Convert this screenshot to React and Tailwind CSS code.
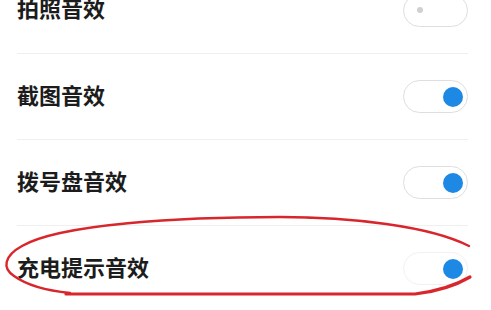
const rows = [
  { label: "拍照音效", on: false },
  { label: "截图音效", on: true },
  { label: "拨号盘音效", on: true },
  { label: "充电提示音效", on: true, faded: true },
];

function Toggle({ on, faded }) {
  return (
    <div
      className={`relative w-[65px] h-[33px] rounded-full border-[1.5px] bg-white flex items-center shrink-0 ${
        faded ? "border-[#f1f1f1]" : "border-[#dedede]"
      }`}
    >
      {on ? (
        <span className="ml-auto mr-[4px] w-[20px] h-[20px] rounded-full bg-[#1e88e5]" />
      ) : (
        <span className="ml-[13px] w-[6px] h-[6px] rounded-full bg-[#d0d0d0]" />
      )}
    </div>
  );
}

export default function App() {
  return (
    <div
      className="relative w-[491px] h-[310px] overflow-hidden bg-white"
      style={{ fontFamily: '"Noto Sans CJK SC", "Noto Sans", sans-serif' }}
    >
      <div className="-mt-[33px] pl-[17px] pr-[23px]">
        {rows.map((r, i) => (
          <div key={r.label}>
            {i > 0 && <div className="h-px bg-[#efefef]" />}
            <div
              className={`flex items-center justify-between ${
                i === 0 ? "h-[86px]" : "h-[85px]"
              }`}
            >
              <span className="pb-[6px] text-[22px] leading-none font-semibold text-[#1c1c1c]">
                {r.label}
              </span>
              <Toggle on={r.on} faded={r.faded} />
            </div>
          </div>
        ))}
      </div>

      {/* red hand-drawn annotation */}
      <svg
        className="absolute inset-0 pointer-events-none"
        width="491"
        height="310"
        viewBox="0 0 491 310"
      >
        <path
          d="M469 246 C 430 226, 350 217, 280 217 C 180 217, 60 224, 22 246 C 4 256, 2 268, 14 276 C 28 286, 50 291, 70 293"
          fill="none"
          stroke="#d8262c"
          strokeWidth="2.4"
          strokeLinecap="round"
        />
        <path
          d="M66 294 L 415 294 C 440 291, 458 284, 470 277"
          fill="none"
          stroke="#d8262c"
          strokeWidth="3.2"
          strokeLinecap="round"
        />
        <path d="M305 219 L 318 217 L 330 219 Z" fill="#d8262c" />
      </svg>
    </div>
  );
}
